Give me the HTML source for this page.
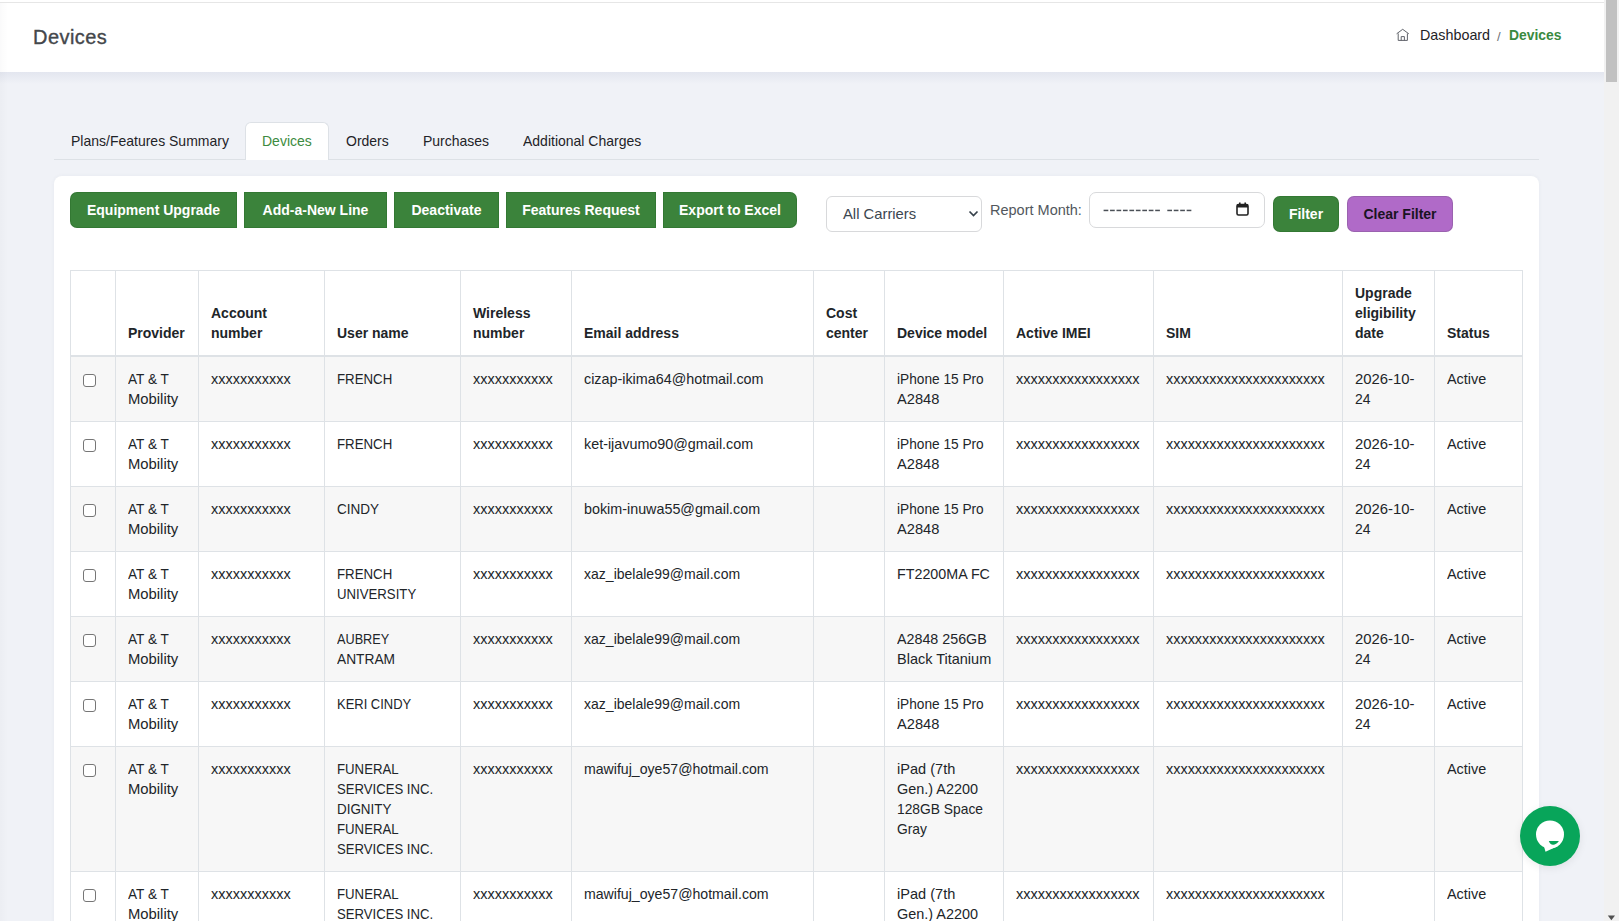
<!DOCTYPE html>
<html><head><meta charset="utf-8">
<style>
*{box-sizing:border-box;}
html,body{margin:0;padding:0;}
body{width:1619px;height:921px;overflow:hidden;position:relative;background:#f0f2f7;font-family:"Liberation Sans",sans-serif;color:#212529;font-size:14px;}
.abs{position:absolute;white-space:nowrap;}
#topline{position:absolute;left:0;top:0;width:1604px;height:3px;background:#fff;border-bottom:1px solid #e6e6e6;}
#header{position:absolute;left:0;top:3px;width:1604px;height:69px;background:#fff;}
#hshadow{position:absolute;left:0;top:72px;width:1604px;height:12px;background:linear-gradient(#e3e6ef,#f0f2f7);}
#title{left:33px;top:23px;font-size:20px;line-height:28px;color:#44474b;letter-spacing:.45px;-webkit-text-stroke:.35px #44474b;}
#bc{top:25px;line-height:20px;font-size:14px;}
#scroll{position:absolute;left:1604px;top:0;width:15px;height:921px;background:#f1f1f1;}
#thumb{position:absolute;left:2px;top:0;width:11px;height:82px;background:#c1c1c1;}
#tabline{position:absolute;left:54px;top:159px;width:1485px;height:1px;background:#dde1e6;}
#tabact{position:absolute;left:245px;top:122px;width:84px;height:38px;background:#fff;border:1px solid #dde1e6;border-bottom:none;border-radius:6px 6px 0 0;}
.tab{top:131px;line-height:20px;font-size:15px;color:#1f2328;transform-origin:0 0;transform:scaleX(.933);}
#card{position:absolute;left:54px;top:176px;width:1485px;height:800px;background:#fff;border-radius:8px;box-shadow:0 0 4px rgba(60,70,100,.05);}
.btn{box-shadow:inset 0 0 0 1px rgba(0,40,0,.12);position:absolute;top:192px;height:36px;background:#3b833b;color:#fff;font-weight:bold;font-size:14px;line-height:36px;text-align:center;white-space:nowrap;}
.sel{position:absolute;left:826px;top:196px;width:156px;height:36px;border:1px solid #d8d9db;border-radius:6px;background:#fff;}
.date{position:absolute;left:1089px;top:192px;width:176px;height:36px;border:1px solid #d8d9db;border-radius:7px;background:#fff;}
table{position:absolute;left:70px;top:270px;border-collapse:collapse;table-layout:fixed;width:1453px;}
td,th{white-space:nowrap;overflow:hidden;border:1px solid #dee2e6;padding:12px 12px;line-height:20px;font-size:14px;text-align:left;vertical-align:top;}
th{vertical-align:bottom;font-weight:bold;color:#212529;background:#fff;}
thead tr{border-bottom:2px solid #dee2e6;}
thead th{border-bottom:2px solid #dee2e6;}
tbody tr:nth-child(odd) td{background:#f7f7f7;}
tbody tr:nth-child(even) td{background:#fff;}
td{color:#212529;font-size:15px;}
.x{}
.s{display:inline-block;transform-origin:0 0;}
.cb{display:inline-block;width:13px;height:13px;border:1px solid #767676;border-radius:3px;background:#fff;margin-top:5px;margin-left:0px;}
#chat{position:absolute;left:1520px;top:806px;width:60px;height:60px;border-radius:50%;background:#08a55a;box-shadow:0 2px 8px rgba(0,0,0,.08);}
</style></head>
<body>
<div id="topline"></div>
<div id="hshadow"></div><div id="header"></div><div style="position:absolute;left:0;top:3px;width:8px;height:918px;background:linear-gradient(to right,rgba(0,0,30,.018),rgba(0,0,30,0));z-index:5;"></div>
<div class="abs" id="title">Devices</div>
<svg class="abs" style="left:1395px;top:27px;" width="16" height="16" viewBox="0 0 16 16"><path d="M1.6 6.8 L7.7 2.3 L13.8 6.8 M3.2 6.4 V13.4 H12.4 V6.4 M6.2 13.4 V9.6 H9.4 V13.4" fill="none" stroke="#585c63" stroke-width="0.95" stroke-linejoin="miter"/></svg>
<div class="abs" id="bc2" style="left:1420px;top:24.6px;line-height:20px;font-size:15px;color:#1f2328;transform-origin:0 0;transform:scaleX(.955);">Dashboard</div>
<div class="abs" style="left:1497px;top:27px;line-height:20px;color:#6c7177;font-size:13px;">/</div>
<div class="abs" style="left:1509px;top:24.6px;line-height:20px;font-size:15px;color:#3a8a3f;font-weight:bold;transform-origin:0 0;transform:scaleX(.925);">Devices</div>

<div id="tabline"></div>
<div id="tabact"></div>
<div class="abs tab" style="left:71px;">Plans/Features Summary</div>
<div class="abs tab" style="left:262px;color:#3d8b40;">Devices</div>
<div class="abs tab" style="left:346px;">Orders</div>
<div class="abs tab" style="left:423px;">Purchases</div>
<div class="abs tab" style="left:523px;">Additional Charges</div>

<div id="card"></div>
<div class="btn" style="left:70px;width:167px;border-radius:7px 0 0 7px;">Equipment Upgrade</div>
<div class="btn" style="left:244px;width:143px;">Add-a-New Line</div>
<div class="btn" style="left:394px;width:105px;">Deactivate</div>
<div class="btn" style="left:506px;width:150px;">Features Request</div>
<div class="btn" style="left:663px;width:134px;border-radius:0 7px 7px 0;">Export to Excel</div>

<div class="sel"></div>
<div class="abs" style="left:843px;top:204px;line-height:20px;font-size:14.8px;color:#3c4650;">All Carriers</div>
<svg class="abs" style="left:968px;top:210px;" width="11" height="8" viewBox="0 0 11 8"><path d="M1.5 1.5 L5.5 5.5 L9.5 1.5" fill="none" stroke="#36414b" stroke-width="1.7"/></svg>
<div class="abs" style="left:990px;top:200px;line-height:20px;font-size:14.5px;color:#52575d;">Report Month:</div>
<div class="date"></div>
<svg class="abs" style="left:1095px;top:195px;" width="110" height="30" viewBox="0 0 110 30"><rect x="8.60" y="14.7" width="4.7" height="1.5" fill="#4a4f56"/><rect x="15.05" y="14.7" width="4.7" height="1.5" fill="#4a4f56"/><rect x="21.50" y="14.7" width="4.7" height="1.5" fill="#4a4f56"/><rect x="27.95" y="14.7" width="4.7" height="1.5" fill="#4a4f56"/><rect x="34.40" y="14.7" width="4.7" height="1.5" fill="#4a4f56"/><rect x="40.85" y="14.7" width="4.7" height="1.5" fill="#4a4f56"/><rect x="47.30" y="14.7" width="4.7" height="1.5" fill="#4a4f56"/><rect x="53.75" y="14.7" width="4.7" height="1.5" fill="#4a4f56"/><rect x="60.20" y="14.7" width="4.7" height="1.5" fill="#4a4f56"/><rect x="72.30" y="14.7" width="4.7" height="1.5" fill="#4a4f56"/><rect x="78.75" y="14.7" width="4.7" height="1.5" fill="#4a4f56"/><rect x="85.20" y="14.7" width="4.7" height="1.5" fill="#4a4f56"/><rect x="91.65" y="14.7" width="4.7" height="1.5" fill="#4a4f56"/></svg>
<svg class="abs" style="left:1236px;top:202px;" width="13" height="14" viewBox="0 0 13 14"><rect x="1" y="2.5" width="11" height="10.5" rx="1.5" fill="none" stroke="#222" stroke-width="1.6"/><rect x="1" y="2.5" width="11" height="3" fill="#222"/><rect x="3" y="0.5" width="1.6" height="3" fill="#222"/><rect x="8.4" y="0.5" width="1.6" height="3" fill="#222"/></svg>
<div class="btn" style="left:1273px;top:196px;width:66px;border-radius:7px;">Filter</div>
<div class="btn" style="left:1347px;top:196px;width:106px;border-radius:7px;background:#b06ac8;color:#1a1422;">Clear Filter</div>

<table>
<colgroup>
<col style="width:45px"><col style="width:83px"><col style="width:126px"><col style="width:136px"><col style="width:111px"><col style="width:242px"><col style="width:71px"><col style="width:119px"><col style="width:150px"><col style="width:189px"><col style="width:92px"><col style="width:88px">
</colgroup>
<thead><tr>
<th></th><th>Provider</th><th>Account<br>number</th><th>User name</th><th>Wireless<br>number</th><th>Email address</th><th>Cost<br>center</th><th>Device model</th><th>Active IMEI</th><th>SIM</th><th>Upgrade<br>eligibility<br>date</th><th>Status</th>
</tr></thead>
<tbody>
<tr><td><span class="cb"></span></td><td><span class="s" style="transform:scaleX(0.907)">AT &amp; T</span><br><span class="s" style="transform:scaleX(0.988)">Mobility</span></td><td><span class="s" style="transform:scaleX(0.966)">xxxxxxxxxxx</span></td><td><span class="s" style="transform:scaleX(0.884)">FRENCH</span></td><td><span class="s" style="transform:scaleX(0.966)">xxxxxxxxxxx</span></td><td><span class="s" style="transform:scaleX(0.956)">cizap-ikima64@hotmail.com</span></td><td></td><td><span class="s" style="transform:scaleX(0.912)">iPhone 15 Pro</span><br><span class="s" style="transform:scaleX(0.977)">A2848</span></td><td><span class="s" style="transform:scaleX(0.968)">xxxxxxxxxxxxxxxxx</span></td><td><span class="s" style="transform:scaleX(0.962)">xxxxxxxxxxxxxxxxxxxxxx</span></td><td><span class="s" style="transform:scaleX(0.990)">2026-10-</span><br><span class="s" style="transform:scaleX(0.929)">24</span></td><td><span class="s" style="transform:scaleX(0.961)">Active</span></td></tr>
<tr><td><span class="cb"></span></td><td><span class="s" style="transform:scaleX(0.907)">AT &amp; T</span><br><span class="s" style="transform:scaleX(0.988)">Mobility</span></td><td><span class="s" style="transform:scaleX(0.966)">xxxxxxxxxxx</span></td><td><span class="s" style="transform:scaleX(0.884)">FRENCH</span></td><td><span class="s" style="transform:scaleX(0.966)">xxxxxxxxxxx</span></td><td><span class="s" style="transform:scaleX(0.956)">ket-ijavumo90@gmail.com</span></td><td></td><td><span class="s" style="transform:scaleX(0.912)">iPhone 15 Pro</span><br><span class="s" style="transform:scaleX(0.977)">A2848</span></td><td><span class="s" style="transform:scaleX(0.968)">xxxxxxxxxxxxxxxxx</span></td><td><span class="s" style="transform:scaleX(0.962)">xxxxxxxxxxxxxxxxxxxxxx</span></td><td><span class="s" style="transform:scaleX(0.990)">2026-10-</span><br><span class="s" style="transform:scaleX(0.929)">24</span></td><td><span class="s" style="transform:scaleX(0.961)">Active</span></td></tr>
<tr><td><span class="cb"></span></td><td><span class="s" style="transform:scaleX(0.907)">AT &amp; T</span><br><span class="s" style="transform:scaleX(0.988)">Mobility</span></td><td><span class="s" style="transform:scaleX(0.966)">xxxxxxxxxxx</span></td><td><span class="s" style="transform:scaleX(0.902)">CINDY</span></td><td><span class="s" style="transform:scaleX(0.966)">xxxxxxxxxxx</span></td><td><span class="s" style="transform:scaleX(0.955)">bokim-inuwa55@gmail.com</span></td><td></td><td><span class="s" style="transform:scaleX(0.912)">iPhone 15 Pro</span><br><span class="s" style="transform:scaleX(0.977)">A2848</span></td><td><span class="s" style="transform:scaleX(0.968)">xxxxxxxxxxxxxxxxx</span></td><td><span class="s" style="transform:scaleX(0.962)">xxxxxxxxxxxxxxxxxxxxxx</span></td><td><span class="s" style="transform:scaleX(0.990)">2026-10-</span><br><span class="s" style="transform:scaleX(0.929)">24</span></td><td><span class="s" style="transform:scaleX(0.961)">Active</span></td></tr>
<tr><td><span class="cb"></span></td><td><span class="s" style="transform:scaleX(0.907)">AT &amp; T</span><br><span class="s" style="transform:scaleX(0.988)">Mobility</span></td><td><span class="s" style="transform:scaleX(0.966)">xxxxxxxxxxx</span></td><td><span class="s" style="transform:scaleX(0.884)">FRENCH</span><br><span class="s" style="transform:scaleX(0.880)">UNIVERSITY</span></td><td><span class="s" style="transform:scaleX(0.966)">xxxxxxxxxxx</span></td><td><span class="s" style="transform:scaleX(0.935)">xaz_ibelale99@mail.com</span></td><td></td><td><span class="s" style="transform:scaleX(0.953)">FT2200MA FC</span></td><td><span class="s" style="transform:scaleX(0.968)">xxxxxxxxxxxxxxxxx</span></td><td><span class="s" style="transform:scaleX(0.962)">xxxxxxxxxxxxxxxxxxxxxx</span></td><td></td><td><span class="s" style="transform:scaleX(0.961)">Active</span></td></tr>
<tr><td><span class="cb"></span></td><td><span class="s" style="transform:scaleX(0.907)">AT &amp; T</span><br><span class="s" style="transform:scaleX(0.988)">Mobility</span></td><td><span class="s" style="transform:scaleX(0.966)">xxxxxxxxxxx</span></td><td><span class="s" style="transform:scaleX(0.847)">AUBREY</span><br><span class="s" style="transform:scaleX(0.916)">ANTRAM</span></td><td><span class="s" style="transform:scaleX(0.966)">xxxxxxxxxxx</span></td><td><span class="s" style="transform:scaleX(0.935)">xaz_ibelale99@mail.com</span></td><td></td><td><span class="s" style="transform:scaleX(0.952)">A2848 256GB</span><br><span class="s" style="transform:scaleX(0.966)">Black Titanium</span></td><td><span class="s" style="transform:scaleX(0.968)">xxxxxxxxxxxxxxxxx</span></td><td><span class="s" style="transform:scaleX(0.962)">xxxxxxxxxxxxxxxxxxxxxx</span></td><td><span class="s" style="transform:scaleX(0.990)">2026-10-</span><br><span class="s" style="transform:scaleX(0.929)">24</span></td><td><span class="s" style="transform:scaleX(0.961)">Active</span></td></tr>
<tr><td><span class="cb"></span></td><td><span class="s" style="transform:scaleX(0.907)">AT &amp; T</span><br><span class="s" style="transform:scaleX(0.988)">Mobility</span></td><td><span class="s" style="transform:scaleX(0.966)">xxxxxxxxxxx</span></td><td><span class="s" style="transform:scaleX(0.864)">KERI CINDY</span></td><td><span class="s" style="transform:scaleX(0.966)">xxxxxxxxxxx</span></td><td><span class="s" style="transform:scaleX(0.935)">xaz_ibelale99@mail.com</span></td><td></td><td><span class="s" style="transform:scaleX(0.912)">iPhone 15 Pro</span><br><span class="s" style="transform:scaleX(0.977)">A2848</span></td><td><span class="s" style="transform:scaleX(0.968)">xxxxxxxxxxxxxxxxx</span></td><td><span class="s" style="transform:scaleX(0.962)">xxxxxxxxxxxxxxxxxxxxxx</span></td><td><span class="s" style="transform:scaleX(0.990)">2026-10-</span><br><span class="s" style="transform:scaleX(0.929)">24</span></td><td><span class="s" style="transform:scaleX(0.961)">Active</span></td></tr>
<tr><td><span class="cb"></span></td><td><span class="s" style="transform:scaleX(0.907)">AT &amp; T</span><br><span class="s" style="transform:scaleX(0.988)">Mobility</span></td><td><span class="s" style="transform:scaleX(0.966)">xxxxxxxxxxx</span></td><td><span class="s" style="transform:scaleX(0.881)">FUNERAL</span><br><span class="s" style="transform:scaleX(0.875)">SERVICES INC.</span><br><span class="s" style="transform:scaleX(0.895)">DIGNITY</span><br><span class="s" style="transform:scaleX(0.881)">FUNERAL</span><br><span class="s" style="transform:scaleX(0.875)">SERVICES INC.</span></td><td><span class="s" style="transform:scaleX(0.966)">xxxxxxxxxxx</span></td><td><span class="s" style="transform:scaleX(0.941)">mawifuj_oye57@hotmail.com</span></td><td></td><td><span class="s" style="transform:scaleX(0.971)">iPad (7th</span><br><span class="s" style="transform:scaleX(0.963)">Gen.) A2200</span><br><span class="s" style="transform:scaleX(0.921)">128GB Space</span><br><span class="s" style="transform:scaleX(0.922)">Gray</span></td><td><span class="s" style="transform:scaleX(0.968)">xxxxxxxxxxxxxxxxx</span></td><td><span class="s" style="transform:scaleX(0.962)">xxxxxxxxxxxxxxxxxxxxxx</span></td><td></td><td><span class="s" style="transform:scaleX(0.961)">Active</span></td></tr>
<tr><td><span class="cb"></span></td><td><span class="s" style="transform:scaleX(0.907)">AT &amp; T</span><br><span class="s" style="transform:scaleX(0.988)">Mobility</span></td><td><span class="s" style="transform:scaleX(0.966)">xxxxxxxxxxx</span></td><td><span class="s" style="transform:scaleX(0.881)">FUNERAL</span><br><span class="s" style="transform:scaleX(0.875)">SERVICES INC.</span><br><span class="s" style="transform:scaleX(0.895)">DIGNITY</span><br><span class="s" style="transform:scaleX(0.881)">FUNERAL</span><br><span class="s" style="transform:scaleX(0.875)">SERVICES INC.</span></td><td><span class="s" style="transform:scaleX(0.966)">xxxxxxxxxxx</span></td><td><span class="s" style="transform:scaleX(0.941)">mawifuj_oye57@hotmail.com</span></td><td></td><td><span class="s" style="transform:scaleX(0.971)">iPad (7th</span><br><span class="s" style="transform:scaleX(0.963)">Gen.) A2200</span><br><span class="s" style="transform:scaleX(0.921)">128GB Space</span><br><span class="s" style="transform:scaleX(0.922)">Gray</span></td><td><span class="s" style="transform:scaleX(0.968)">xxxxxxxxxxxxxxxxx</span></td><td><span class="s" style="transform:scaleX(0.962)">xxxxxxxxxxxxxxxxxxxxxx</span></td><td></td><td><span class="s" style="transform:scaleX(0.961)">Active</span></td></tr>
</tbody>
</table>

<div id="chat">
<svg width="60" height="60" viewBox="0 0 60 60"><circle cx="30" cy="28.5" r="14" fill="#fff"/><path d="M23.5 38.5 L25.5 45.7 L38 40 Z" fill="#fff"/><path d="M28.8 35 H38.9 Q36 39 33 38.8 Q30 38.6 28.8 35 Z" fill="#08a55a"/></svg>
</div>

<div id="scroll"><div id="thumb"></div><svg style="position:absolute;left:0;top:912px;" width="15" height="9" viewBox="0 0 15 9"><path d="M3.8 3.6 H11 L7.4 8.2 Z" fill="#505050"/></svg></div>
</body></html>
